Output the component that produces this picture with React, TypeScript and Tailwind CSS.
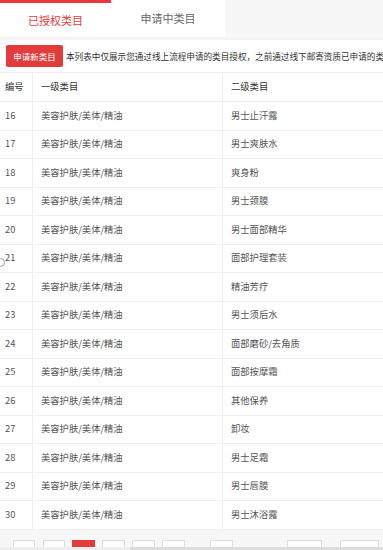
import React from "react";

const rows: [number, string][] = [
  [16, "男士止汗露"],
  [17, "男士爽肤水"],
  [18, "爽身粉"],
  [19, "男士颈膜"],
  [20, "男士面部精华"],
  [21, "面部护理套装"],
  [22, "精油芳疗"],
  [23, "男士须后水"],
  [24, "面部磨砂/去角质"],
  [25, "面部按摩霜"],
  [26, "其他保养"],
  [27, "卸妆"],
  [28, "男士足霜"],
  [29, "男士唇膜"],
  [30, "男士沐浴露"],
];

export default function App() {
  return (
    <div
      className="relative w-[383px] h-[550px] overflow-hidden bg-white flex flex-col"
      style={{ fontFamily: '"Noto Sans CJK SC", "Noto Sans", sans-serif' }}
    >
      {/* Tabs */}
      <div className="flex h-[37px] bg-[#f7f7f7] shrink-0">
        <div className="w-[111px] bg-white border-t-[3px] border-[#e4393c] text-[#e4393c] text-[11px] flex items-center justify-center">
          已授权类目
        </div>
        <div className="w-[114px] bg-white text-[#666] text-[11px] flex items-center justify-center">
          申请中类目
        </div>
      </div>
      <div className="h-[3px] bg-[#f4f4f4] shrink-0" />

      {/* Action row */}
      <div className="h-[32px] flex items-center pl-[6px] gap-[3px] shrink-0 whitespace-nowrap">
        <div className="w-[57px] h-[22px] bg-[#e23b3b] rounded-[2px] text-white text-[8.5px] flex items-center justify-center shrink-0">
          申请新类目
        </div>
        <div className="text-[8.6px] text-[#333] shrink-0">
          本列表中仅展示您通过线上流程申请的类目授权，之前通过线下邮寄资质已申请的类目授权请联系客服查询
        </div>
      </div>

      {/* Table */}
      <div className="border-t border-[#eeeeee] shrink-0">
        <div className="grid grid-cols-[33px_190px_1fr] h-[29px] border-b border-[#eeeeee] text-[9.3px] text-[#333]">
          <div className="flex items-center pl-[5px] border-r border-[#eeeeee]">编号</div>
          <div className="flex items-center pl-[8px] border-r border-[#eeeeee]">一级类目</div>
          <div className="flex items-center pl-[8px]">二级类目</div>
        </div>
        {rows.map(([n, name]) => (
          <div
            key={n}
            className="grid grid-cols-[33px_190px_1fr] h-[28.5px] border-b border-[#f0f0f0] text-[9.3px] text-[#555]"
          >
            <div className="flex items-center pl-[5px] border-r border-[#eeeeee]">{n}</div>
            <div className="flex items-center pl-[8px] border-r border-[#eeeeee]">美容护肤/美体/精油</div>
            <div className="flex items-center pl-[8px]">{name}</div>
          </div>
        ))}
      </div>

      {/* Pagination */}
      <div className="flex-1 bg-[#f7f7f7] overflow-hidden flex items-start pt-[10px] pl-[13px]">
        <div className="w-[22px] h-[20px] bg-white border border-[#dddddd] shrink-0" />
        <div className="w-[22px] h-[20px] bg-white border border-[#dddddd] ml-[8px] shrink-0" />
        <div className="w-[23px] h-[20px] bg-[#e23b3b] border border-[#e23b3b] ml-[7px] shrink-0" />
        <div className="w-[23px] h-[20px] bg-white border border-[#dddddd] ml-[7px] shrink-0" />
        <div className="w-[23px] h-[20px] bg-white border border-[#dddddd] ml-[7px] shrink-0" />
        <div className="w-[23px] h-[20px] bg-white border border-[#dddddd] ml-[7px] shrink-0" />
        <div className="w-[23px] h-[20px] bg-white border border-[#dddddd] ml-[25px] shrink-0" />
        <div className="w-[35px] h-[20px] bg-white border border-[#dddddd] ml-[54px] shrink-0" />
        <div className="w-[39px] h-[20px] bg-white border border-[#dddddd] ml-[18px] shrink-0" />
      </div>
      <div className="h-[3px] bg-[#eeeeee] flex shrink-0">
        <div className="w-[130px]" />
        <div className="flex-1 bg-[#dcdcdc]" />
      </div>

      {/* partial circle on left edge */}
      <div className="absolute left-[-4px] top-[258px] w-[9px] h-[9px] rounded-full border border-[#999]" />
    </div>
  );
}
